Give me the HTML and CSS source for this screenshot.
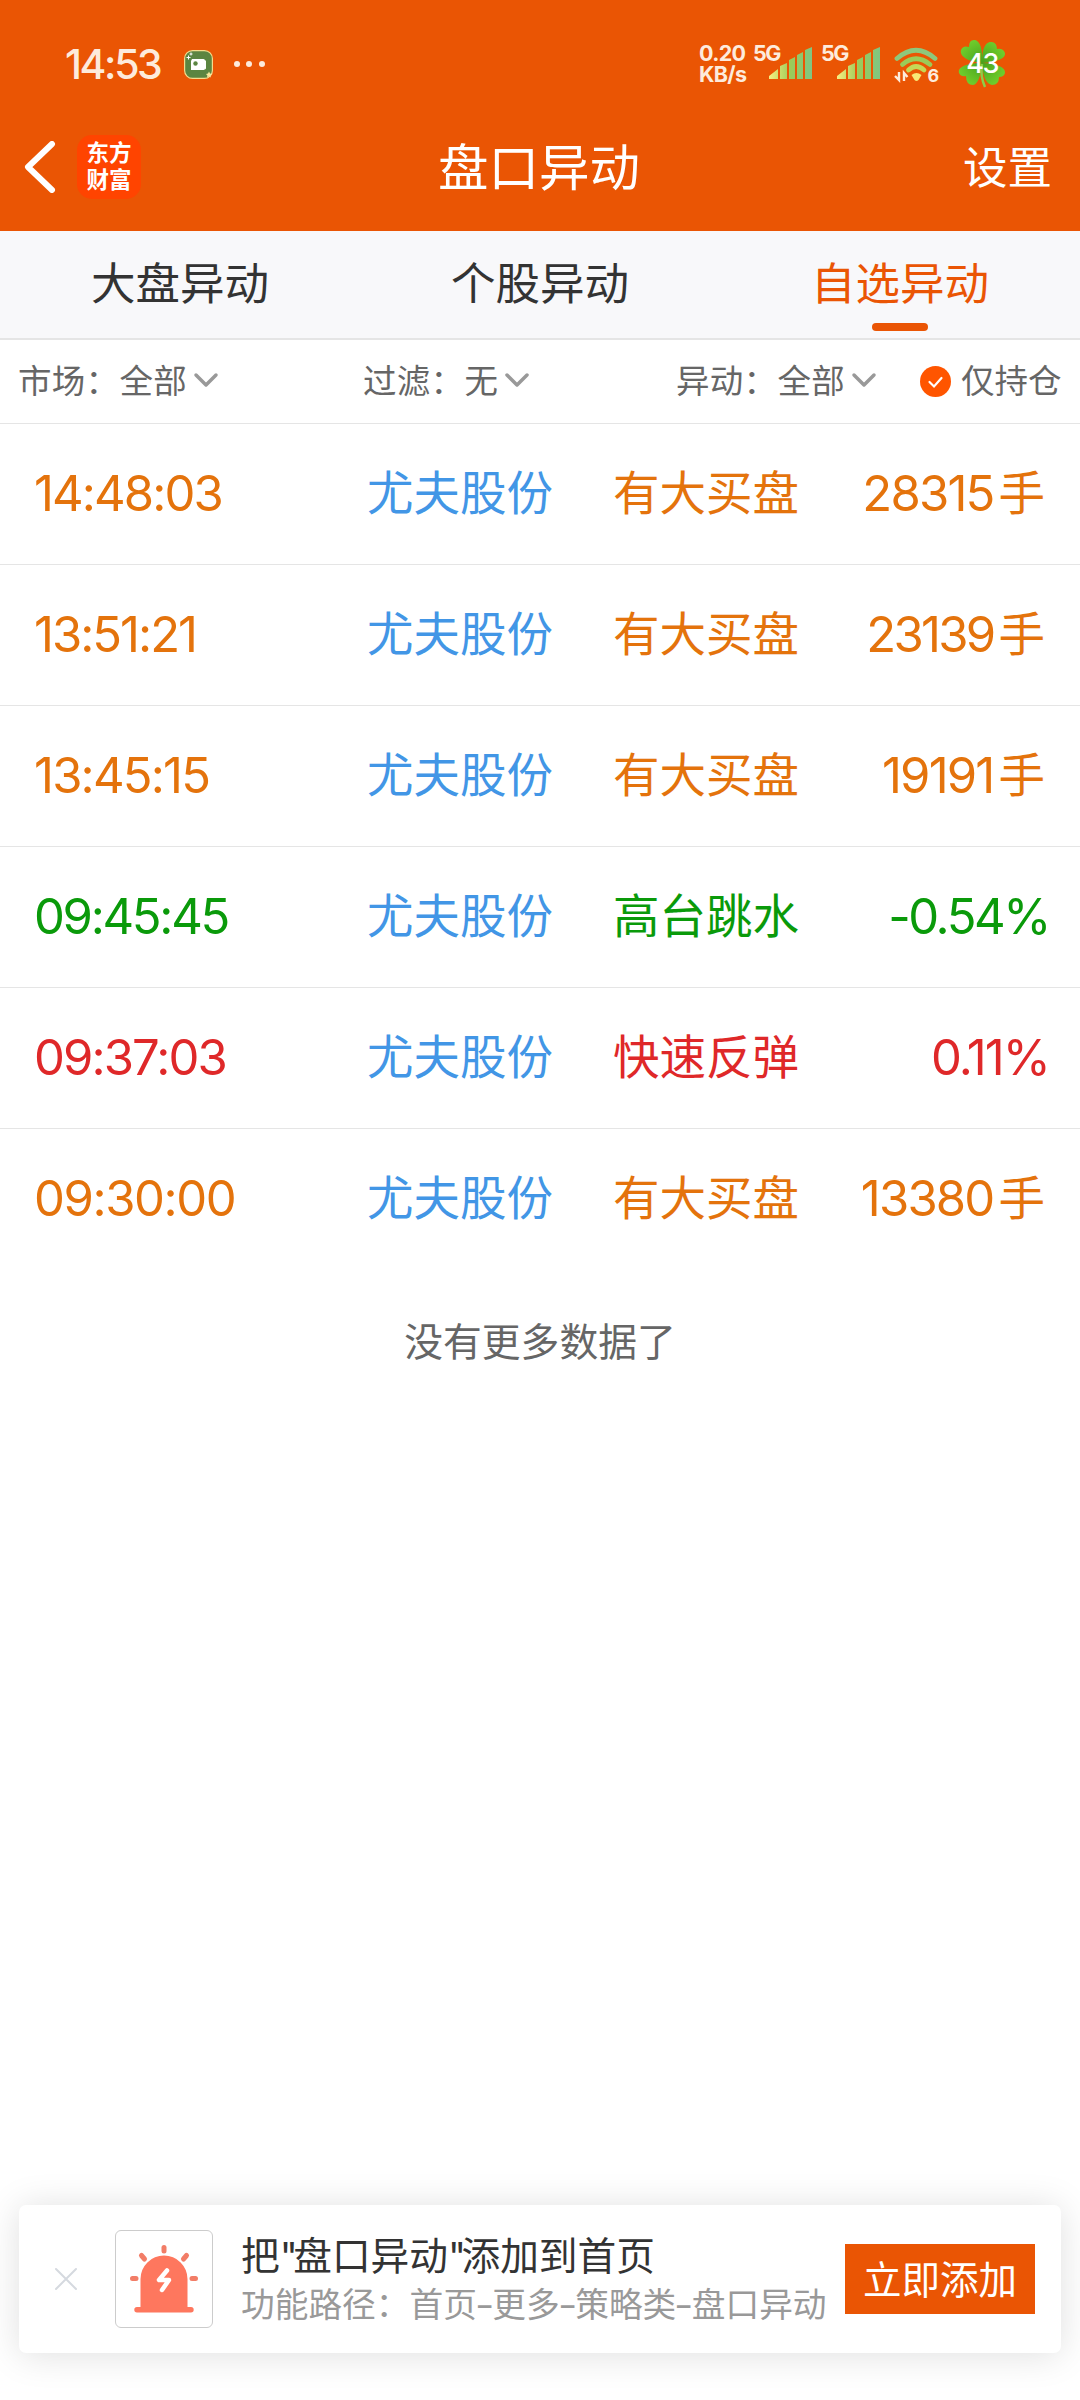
FILE: index.html
```html
<!DOCTYPE html>
<html lang="zh-CN">
<head>
<meta charset="utf-8">
<title>盘口异动</title>
<link rel="stylesheet" href="styles.css">
</head>
<body>
<header class="header">
  <div class="status">
    <span class="clock">14:53</span>
    <svg class="cam" width="29" height="29" viewBox="0 0 29 29"><rect x=".6" y=".6" width="27.8" height="27.8" rx="8" fill="#5b8541" stroke="#f3dc8c" stroke-width="1.2"/><path fill="#fff" d="M8 9h11.500q1.500 0 1.500 1.500v2l1-1v8l-1-1q0 1.500-1.500 1.500H7V11zM20 12l2-2v9l-2-2z"/><circle cx="11.500" cy="13.500" r="2.200" fill="#5b8541"/><path d="M4.500 5.500v4M2.500 7.500h4M7 2.500v3M5.500 4h3" stroke="#fff" stroke-width="1"/><path d="M25 21.500l1 2 2 .5-1.500 1.500.3 2-1.800-1-2 1 .4-2-1.400-1.500 2-.5z" fill="#f7e79a"/></svg>
    <svg class="dots" width="32" height="8" viewBox="0 0 32 8" fill="#fdebdc"><circle cx="4" cy="4" r="3"/><circle cx="16" cy="4" r="3"/><circle cx="29" cy="4" r="3"/></svg>
    <span class="speed"><span>0.20</span><span>KB/s</span></span>
    <span class="net">5G</span>
    <svg class="signal" width="43" height="33" viewBox="0 0 43 33"><defs><linearGradient id="sg"><stop offset="0" stop-color="#f8ee80"/><stop offset=".5" stop-color="#9ccb58"/><stop offset="1" stop-color="#7fc583"/></linearGradient></defs><path fill="url(#sg)" d="M0 32v-3l9-7v10zM11 32V19l7-3v16zM20 32V13l6-3v22zM28 32V8l6-3v27zM36 32V3l7-3v32z"/></svg>
    <span class="net net2">5G</span>
    <svg class="signal" width="43" height="33" viewBox="0 0 43 33"><path fill="url(#sg)" d="M0 32v-3l9-7v10zM11 32V19l7-3v16zM20 32V13l6-3v22zM28 32V8l6-3v27zM36 32V3l7-3v32z"/></svg>
    <svg class="wifi" width="50" height="42" viewBox="0 0 50 42"><g fill="none" stroke-linecap="round" stroke-width="4.800"><path stroke="#8dc87c" d="M3 12.500Q22 -4 41 12.500"/><path stroke="#9bcb58" d="M8.500 18.500Q22 7 36 18.500"/><path stroke="#c5d857" d="M14.500 24Q22 17 30 24"/></g><path fill="#f8e876" d="M17.500 29q5-4 10 0l-3 5q-2 2-4 0z"/><path fill="none" stroke="#fdebdc" stroke-width="2.400" d="M5 26v8l-4-4M10 35v-8l3.500 4"/><text x="33.500" y="35.500" class="wifi-n">6</text></svg>
    <div class="battery">
      <svg width="48" height="49" viewBox="0 0 48 49"><defs><radialGradient id="lf" gradientUnits="userSpaceOnUse" cx="24" cy="24" r="24"><stop offset="0" stop-color="#46a01c"/><stop offset="1" stop-color="#6fcc2c"/></radialGradient></defs><g fill="url(#lf)"><path d="M24 24C14 23 1 19 3 11Q5 6 11 8Q11 0 17 1Q25 3 24 24z"/><path d="M24 24C24 13 26 2 34 3Q39 4 39 10Q45 9 47 14Q48 22 24 24z"/><path d="M24 24C12 24 -1 27 1 34Q3 38 8 37Q8 46 15 46Q22 45 24 24z"/><path d="M24 24C34 24 48 27 47 34Q46 38 41 38Q41 46 34 46Q25 44 24 24z"/></g><path d="M24 25q-2 12 3 23" fill="none" stroke="#8cce48" stroke-width="2.500"/></svg>
      <span class="level">43</span>
    </div>
  </div>
  <div class="nav">
    <svg class="back" width="32" height="52" viewBox="0 0 32 52"><path d="M28 3L4 26l24 23" fill="none" stroke="#fff" stroke-width="6" stroke-linecap="round" stroke-linejoin="round"/></svg>
    <div class="logo"><span>东方</span><span>财富</span></div>
    <h1 class="title">盘口异动</h1>
    <span class="settings">设置</span>
  </div>
</header>
<nav class="tabs">
  <span class="tab">大盘异动</span>
  <span class="tab">个股异动</span>
  <span class="tab active">自选异动</span>
</nav>
<section class="filters">
  <span class="filter">市场：全部<svg width="26" height="18" viewBox="0 0 26 18"><path d="M3 3l10 10L23 3"/></svg></span>
  <span class="filter">过滤：无<svg width="26" height="18" viewBox="0 0 26 18"><path d="M3 3l10 10L23 3"/></svg></span>
  <span class="filter">异动：全部<svg width="26" height="18" viewBox="0 0 26 18"><path d="M3 3l10 10L23 3"/></svg></span>
  <span class="holding"><svg width="31" height="31" viewBox="0 0 31 31"><circle cx="15.500" cy="15.500" r="15.500" fill="#ff5500"/><path d="M9.500 16l4.500 4.500 7.500-8.500" fill="none" stroke="#fff" stroke-width="2.200" stroke-linecap="round"/></svg>仅持仓</span>
</section>
<main class="list">
  <div class="row buy"><span class="time t1">14:48:03</span><span class="name">尤夫股份</span><span class="event">有大买盘</span><span class="value"><b class="v1">28315</b>手</span></div>
  <div class="row buy"><span class="time t2">13:51:21</span><span class="name">尤夫股份</span><span class="event">有大买盘</span><span class="value"><b class="v2">23139</b>手</span></div>
  <div class="row buy"><span class="time t3">13:45:15</span><span class="name">尤夫股份</span><span class="event">有大买盘</span><span class="value"><b class="v3">19191</b>手</span></div>
  <div class="row down"><span class="time t4">09:45:45</span><span class="name">尤夫股份</span><span class="event">高台跳水</span><span class="value percent"><b class="v4">-0.54%</b></span></div>
  <div class="row up"><span class="time t5">09:37:03</span><span class="name">尤夫股份</span><span class="event">快速反弹</span><span class="value percent"><b class="v5">0.11%</b></span></div>
  <div class="row buy"><span class="time t6">09:30:00</span><span class="name">尤夫股份</span><span class="event">有大买盘</span><span class="value"><b class="v6">13380</b>手</span></div>
  <p class="end">没有更多数据了</p>
</main>
<aside class="promo">
  <svg class="close" width="24" height="24" viewBox="0 0 24 24"><path d="M2 2l20 20M22 2L2 22" stroke="#d5d9df" stroke-width="2" stroke-linecap="round"/></svg>
  <div class="promo-icon"><svg width="70" height="70" viewBox="0 0 70 70"><path fill="#fe775e" d="M11.500 63V35a23.500 23.500 0 0 1 47 0v28h3.500a2.700 2.700 0 0 1 0 5.400H8a2.700 2.700 0 0 1 0-5.400z"/><g stroke="#f27d67" stroke-width="5" stroke-linecap="round"><path d="M35 3.500V7"/><path d="M12.500 11.500l3 3.500M57.500 11.500l-3 3.500"/><path d="M3.500 34.500H7M66.500 34.500H63"/></g><path d="M38 26.500l-8 9.500h10l-7 10" fill="none" stroke="#fff" stroke-width="4.500" stroke-linecap="round" stroke-linejoin="round"/></svg></div>
  <div class="promo-text"><span class="promo-title">把<span class="quote">"</span>盘口异动<span class="quote">"</span>添加到首页</span><span class="promo-sub">功能路径：首页<span class="dash">-</span>更多<span class="dash">-</span>策略类<span class="dash">-</span>盘口异动</span></div>
  <button class="add">立即添加</button>
</aside>
</body>
</html>
```
FILE: styles.css
```css
* { box-sizing: border-box; }
body {
  margin: 0; width: 1080px; height: 2400px; background: #fff; color: #333;
  font-family: Inter, "Noto Sans CJK SC", sans-serif;
  display: flex; flex-direction: column; overflow: hidden;
}
svg { display: block; flex: none; }
span, b, h1, button { white-space: nowrap; }
.header { height: 231px; background: #ea5504; color: #fff; }
.status { height: 104px; padding: 35px 0 0 65px; display: flex; align-items: flex-start; color: #fdebdc; }
.clock { width: 119px; font-size: 41px; line-height: 58px; font-weight: 500; letter-spacing: -2.4px; }
.cam { margin-top: 15px; }
.dots { margin: 25px 0 0 20px; }
.speed { margin: 8px 0 0 434px; width: 54px; display: flex; flex-direction: column; font-size: 21.5px; line-height: 20.5px; font-weight: 700; letter-spacing: -0.7px; }
.net { margin-top: 8px; width: 16px; font-size: 21.5px; line-height: 20.5px; font-weight: 700; letter-spacing: -1.5px; }
.net2 { margin-left: 9px; }
.signal { margin-top: 12px; }
.wifi { margin: 11px 0 0 14px; }
.wifi-n { font: 700 18px Inter, sans-serif; fill: #fdebdc; }
.battery { margin: 4px 0 0 14px; display: grid; }
.battery > * { grid-area: 1 / 1; }
.level { justify-self: center; font-size: 27px; line-height: 49px; font-weight: 500; color: #fff; letter-spacing: -1.5px; }
.nav { height: 127px; padding: 0 30px 0 24px; display: grid; grid-template-columns: 53px 64px 1fr 86px; align-items: center; }
.back { margin-top: -1px; }
.logo { height: 64px; margin-top: -2px; border-radius: 15px; background: #ff4400; display: flex; flex-direction: column; align-items: center; padding-top: 3px; font: 700 22.5px/27px "Noto Sans CJK SC", sans-serif; }
.title { margin: 0 0 0 -27px; text-align: center; font-size: 50.5px; line-height: 60px; font-weight: 400; }
.settings { font-size: 44.5px; line-height: 60px; margin-left: -1px; }
.tabs { height: 109px; background: #f8f8fa; border-bottom: 2px solid #e5e5e5; display: grid; grid-template-columns: repeat(3, 1fr); }
.tab { display: flex; flex-direction: column; align-items: center; font-size: 44.5px; line-height: 93px; padding-top: 7px; }
.active { color: #ea5504; }
.active::after { content: ""; width: 56px; height: 8px; border-radius: 4px; background: #ea5504; margin-top: -8px; }
.filters { height: 84px; border-bottom: 1px solid #e5e5e5; display: grid; grid-template-columns: 345px 313px 244px 1fr; padding: 0 0 1px 18px; align-items: center; font-size: 33.5px; line-height: 50px; color: #666; }
.filter, .holding { display: flex; align-items: center; }
.filter { letter-spacing: 0.3px; }
.filter svg { margin-left: 6px; fill: none; stroke: #999; stroke-width: 3.5; stroke-linecap: round; stroke-linejoin: round; }
.holding svg { margin-right: 10px; }
.row { height: 141px; border-bottom: 1px solid #e5e5e5; padding: 0 35px 3px; display: grid; grid-template-columns: 332px 246px 1fr auto; align-items: center; font-size: 46.5px; line-height: 70px; }
.row:nth-child(6) { border-bottom: 0; }
.row b { font-weight: 400; }
.time, .row b { font-size: 49px; line-height: 70px; }
.time { margin: 2px 0 0 -1px; }
.name { color: #4296e6; }
.value { display: flex; align-items: center; }
.value b { margin: 2px 5px 0 0; }
.percent b { margin-right: -4px; }
.t1 { letter-spacing: -1.9px; }
.t2 { letter-spacing: -2px; }
.t3 { letter-spacing: -1.8px; }
.t4 { letter-spacing: -2.3px; }
.t5 { letter-spacing: -1.9px; }
.t6 { letter-spacing: -1.4px; }
.v1 { letter-spacing: -1.8px; }
.v2 { letter-spacing: -2.7px; }
.v3 { letter-spacing: -1.8px; }
.v4 { letter-spacing: -2.4px; }
.v5 { letter-spacing: -1.9px; }
.v6 { letter-spacing: -1.8px; }
.buy { color: #e4730c; }
.down { color: #0a9a0a; }
.up { color: #df2829; }
.end { margin: 44px 0 0; text-align: center; font-size: 38.8px; line-height: 56px; color: #666; }
.promo { margin: auto 19px 47px; height: 148px; background: #fff; border-radius: 7px; box-shadow: 0 2px 36px rgba(0,0,0,.13); display: flex; align-items: center; padding: 0 26px 0 35px; }
.promo-icon { margin-left: 37px; width: 98px; height: 98px; border: 1px solid #ccc; border-radius: 6px; display: grid; place-items: center; }
.promo-text { margin: 2px 0 0 28px; width: 604px; display: flex; flex-direction: column; }
.promo-title { font-size: 38.7px; line-height: 50px; }
.quote { letter-spacing: -4.5px; }
.promo-sub { font-size: 33.7px; line-height: 48px; color: #999; }
.dash { display: inline-block; transform: scaleX(1.25); }
.add { border: 0; padding: 0 0 3px; width: 190px; height: 70px; background: #ea5504; color: #fff; font: 400 38.5px/67px "Noto Sans CJK SC", sans-serif; }
```
